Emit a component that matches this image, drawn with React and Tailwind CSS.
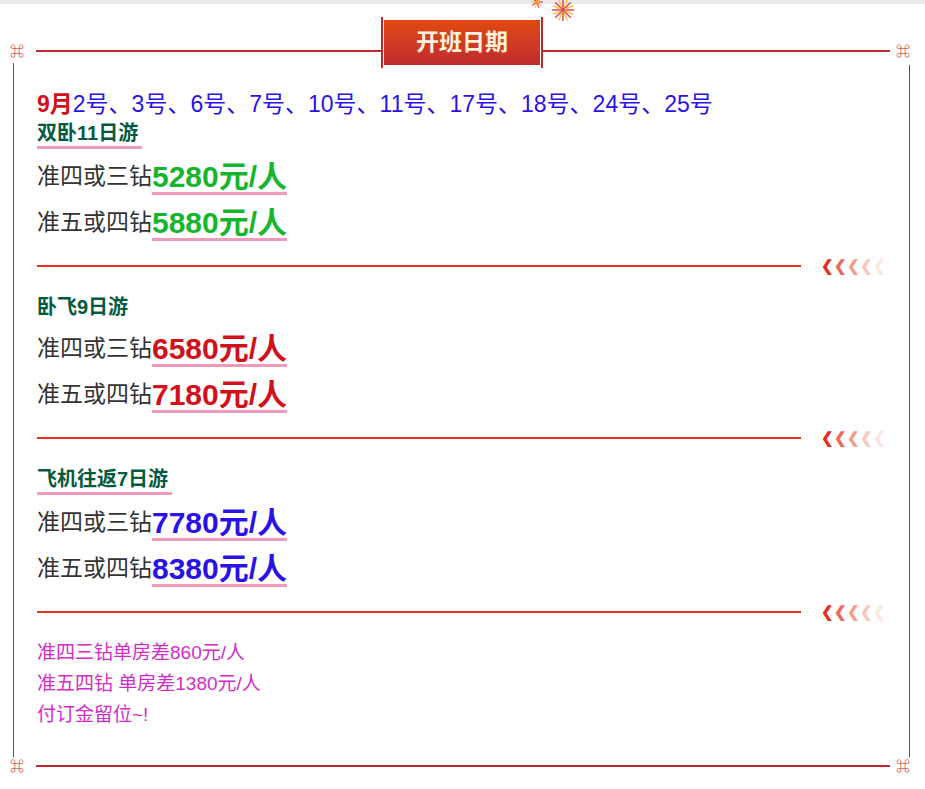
export default function App() {
  const font = { fontFamily: '"Liberation Sans", "Noto Sans CJK SC", sans-serif' };
  const Corner = ({ cls }) => (
    <span className={`absolute text-[14px] font-bold leading-none text-[#c0282d] ${cls}`}>⌘</span>
  );
  const Divider = () => (
    <div className="flex items-center mt-[17px] mb-[22px] pr-[26px]">
      <div className="h-[2px] bg-[#e0321e] flex-1" />
      <div className="ml-[20px] flex gap-[0px]">
        {["#e0321e", "#ec6a58", "#f29c8e", "#f8c8c0", "#fce6e2"].map((c, i) => (
          <span key={i} className="text-[15px] font-bold leading-none" style={{ color: c }}>❮</span>
        ))}
      </div>
    </div>
  );
  const Price = ({ label, price, color }) => (
    <div className="flex items-end h-[46px] text-[23px] text-[#333]">
      <span className="mb-[2px]">{label}</span>
      <span className={`text-[30px] font-bold leading-none border-b-[3px] border-[#f39ab8] ${color}`}>{price}元/人</span>
    </div>
  );
  const Group = ({ title, items, color, underline }) => (
    <div>
      <div className={`text-[20px] font-bold text-[#035a3e] inline-block leading-tight pr-[4px] ${underline ? "border-b-[3px] border-[#f39ab8]" : ""}`}>{title}</div>
      <div className="mt-[0px]">
        {items.map(([l, p]) => <Price key={l} label={l} price={p} color={color} />)}
      </div>
    </div>
  );
  return (
    <div className="w-[925px] h-[789px] bg-white relative" style={font}>
      <div className="h-[4px] bg-[#ebebeb]" />
      <div className="relative mx-[13px] mt-[13px] h-[754px]">
        <svg className="absolute left-[513px] top-[-17px]" width="60" height="30" viewBox="0 0 60 30">
          {Array.from({ length: 16 }).map((_, i) => {
            const a = (i / 16) * Math.PI * 2;
            return <line key={i} x1={37} y1={10} x2={37 + Math.cos(a) * 11} y2={10 + Math.sin(a) * 11} stroke={i % 2 ? "#f7c948" : "#e8415e"} strokeWidth="1.5" />;
          })}
          {Array.from({ length: 10 }).map((_, i) => {
            const a = (i / 10) * Math.PI * 2;
            return <line key={i} x1={11} y1={2} x2={11 + Math.cos(a) * 6} y2={2 + Math.sin(a) * 6} stroke={i % 2 ? "#f7c948" : "#e8415e"} strokeWidth="1.2" />;
          })}
          <circle cx="37" cy="10" r="2" fill="#e8415e" />
        </svg>
        <div className="absolute left-[23px] right-[22px] top-[33px] h-[2px] bg-[#c0282d]" />
        <div className="absolute left-[368px] top-0 w-[162px] h-[51px] bg-white flex items-center justify-center">
          <div className="absolute left-0 top-0 bottom-0 w-[2px] bg-[#c0282d]" />
          <div className="absolute right-0 top-0 bottom-0 w-[2px] bg-[#c0282d]" />
          <div className="w-[156px] h-[45px] bg-gradient-to-b from-[#e04a0c] to-[#c02a2e] flex items-center justify-center text-[23px] font-bold text-[#fff2dc]">开班日期</div>
        </div>
        <Corner cls="left-[-3px] top-[27px]" />
        <Corner cls="right-[2px] top-[27px]" />
        <Corner cls="left-[-3px] bottom-[-2px]" />
        <Corner cls="right-[2px] bottom-[-2px]" />
        <div className="absolute left-0 top-[46px] bottom-[14px] w-[1px] bg-[#c0282d]" />
        <div className="absolute right-[2px] top-[48px] bottom-[14px] w-[1px] bg-[#c0282d]" />
        <div className="absolute left-[23px] right-[22px] bottom-[4px] h-[2px] bg-[#c0282d]" />

        <div className="pl-[24px] pt-[70px]">
          <div className="text-[23px] leading-[34px] text-[#2a12e6]"><span className="font-bold text-[#d0101b]">9月</span>2号、3号、6号、7号、10号、11号、17号、18号、24号、25号</div>
          <Group title="双卧11日游" underline color="text-[#16b52e]" items={[["准四或三钻", "5280"], ["准五或四钻", "5880"]]} />
          <Divider />
          <Group title="卧飞9日游" color="text-[#d0101b]" items={[["准四或三钻", "6580"], ["准五或四钻", "7180"]]} />
          <Divider />
          <Group title="飞机往返7日游" underline color="text-[#2a12e6]" items={[["准四或三钻", "7780"], ["准五或四钻", "8380"]]} />
          <Divider />
          <div className="text-[19px] leading-[31px] text-[#d22cc8] mt-[-4px]">
            <div>准四三钻单房差860元/人</div>
            <div>准五四钻 单房差1380元/人</div>
            <div>付订金留位~!</div>
          </div>
        </div>
      </div>
    </div>
  );
}
